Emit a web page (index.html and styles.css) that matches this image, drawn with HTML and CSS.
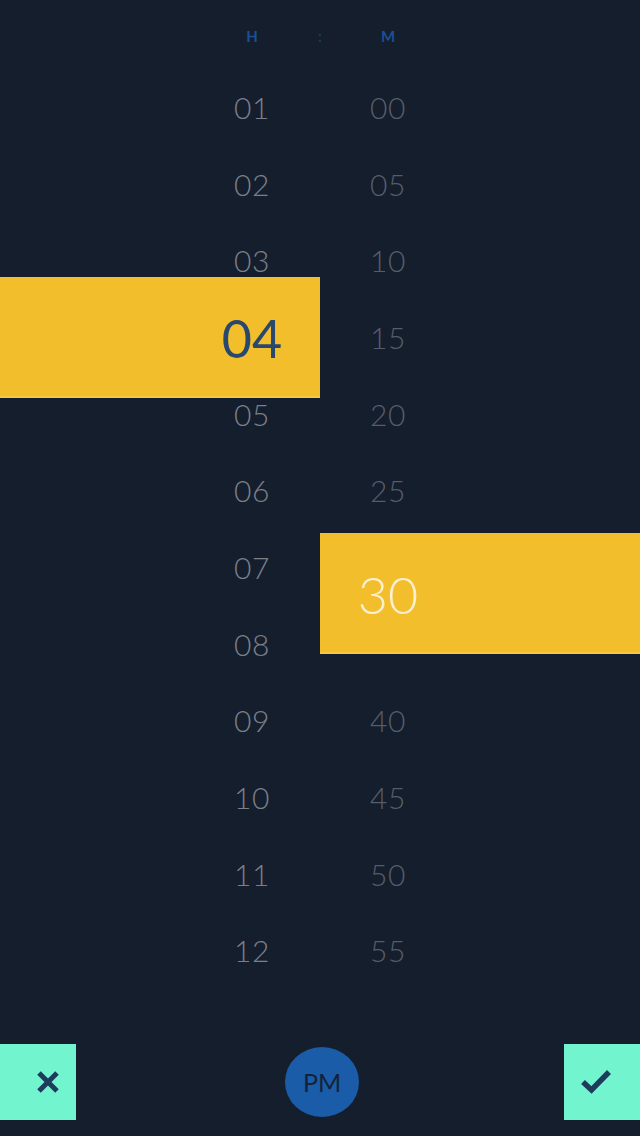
FILE: index.html
```html
<!DOCTYPE html>
<html>
<head>
<meta charset="utf-8">
<link rel="stylesheet" href="styles.css">
</head>
<body>
<div class="screen">
  <div class="header">
    <div class="col">H</div>
    <div class="colon">:</div>
    <div class="col">M</div>
  </div>
  <div class="lists">
    <div class="col hours">
      <div class="row">01</div><div class="row">02</div><div class="row">03</div><div class="row slot"></div>
      <div class="row">05</div><div class="row">06</div><div class="row">07</div><div class="row">08</div>
      <div class="row">09</div><div class="row">10</div><div class="row">11</div><div class="row">12</div>
    </div>
    <div class="colon"></div>
    <div class="col minutes">
      <div class="row">00</div><div class="row">05</div><div class="row">10</div><div class="row">15</div>
      <div class="row">20</div><div class="row">25</div><div class="row slot"></div><div class="row slot"></div>
      <div class="row">40</div><div class="row">45</div><div class="row">50</div><div class="row">55</div>
    </div>
  </div>
  <div class="spacer"></div>
  <div class="footer">
    <button class="action cancel" aria-label="Cancel">
      <svg width="24" height="24" viewBox="0 0 24 24"><path d="M3 3 L21 21 M21 3 L3 21" stroke="#1d3b5c" stroke-width="5" fill="none"/></svg>
    </button>
    <div class="ampm">PM</div>
    <button class="action confirm" aria-label="Confirm">
      <svg width="32" height="26" viewBox="0 0 32 26"><path d="M3 13 L11.5 21 L29 3" stroke="#1d3b5c" stroke-width="5.5" fill="none" stroke-linejoin="miter"/></svg>
    </button>
  </div>
  <div class="bar bar-hours"><span class="big">04</span></div>
  <div class="bar bar-minutes"><span class="big">30</span></div>
</div>
</body>
</html>
```
FILE: styles.css
```css
html, body {
  margin: 0;
  padding: 0;
  background: #151e2c;
}
.screen {
  position: relative;
  width: 640px;
  height: 1136px;
  display: flex;
  flex-direction: column;
  font-family: "Lato", "DejaVu Sans", sans-serif;
  overflow: hidden;
}
.header {
  height: 69px;
  display: flex;
  justify-content: center;
  align-items: center;
  padding-top: 3px;
  box-sizing: border-box;
  font-size: 15px;
  font-weight: 700;
  color: #1b4f96;
}
.col {
  width: 80px;
  text-align: center;
}
.colon {
  width: 56px;
  text-align: center;
  color: #1a3862;
}
.lists {
  display: flex;
  justify-content: center;
}
.row {
  height: 76.67px;
  line-height: 76.67px;
  font-size: 30px;
  font-weight: 300;
  letter-spacing: 0.5px;
}
.hours .row { color: #7a808a; }
.minutes .row { color: #565d6a; }
.spacer { flex: 1; }
.footer {
  display: flex;
  justify-content: space-between;
  align-items: center;
  padding-bottom: 16px;
}
.action {
  width: 76px;
  height: 76px;
  border: 0;
  padding: 0;
  background: #72f5cf;
  display: flex;
  align-items: center;
  justify-content: center;
}
.cancel { padding-left: 20px; }
.confirm { padding-right: 12px; }
.ampm {
  width: 74px;
  height: 70px;
  border-radius: 50%;
  background: #1a5ca8;
  color: #13223a;
  font-size: 25px;
  display: flex;
  align-items: center;
  justify-content: center;
  margin-left: 4px;
}
.bar {
  position: absolute;
  width: 320px;
  height: 121px;
  background: #f3be2b;
  border-bottom: 2px solid #f6c73f;
  box-sizing: border-box;
  display: flex;
  align-items: center;
}
.bar-hours {
  top: 277px;
  left: 0;
  justify-content: flex-end;
  padding-right: 28px;
}
.bar-minutes {
  top: 533px;
  left: 320px;
  padding-left: 28px;
}
.big {
  width: 80px;
  text-align: center;
  font-size: 52px;
  font-weight: 300;
  padding-top: 3px;
}
.bar-hours .big { color: #28486e; font-weight: 400; }
.bar-minutes .big { color: #fcf0d2; }
```
